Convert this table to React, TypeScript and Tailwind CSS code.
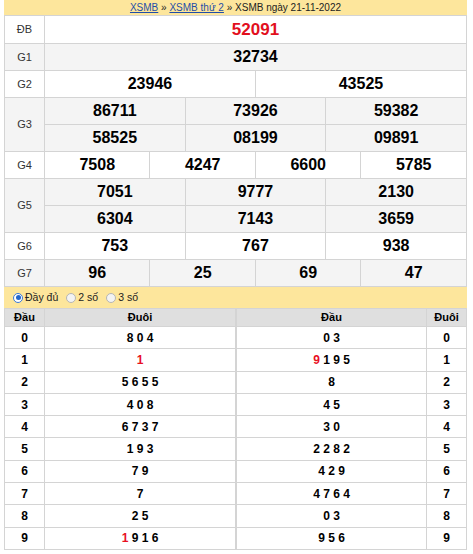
import React from 'react';

const font = { fontFamily: '"Liberation Sans", Arial, sans-serif' };

type Row = { label: string; cells: string[][]; bg: string; red?: boolean };

const prizes: Row[] = [
  { label: 'ĐB', cells: [['52091']], bg: 'bg-white', red: true },
  { label: 'G1', cells: [['32734']], bg: 'bg-[#f4f4f4]' },
  { label: 'G2', cells: [['23946', '43525']], bg: 'bg-white' },
  { label: 'G3', cells: [['86711', '73926', '59382'], ['58525', '08199', '09891']], bg: 'bg-[#f4f4f4]' },
  { label: 'G4', cells: [['7508', '4247', '6600', '5785']], bg: 'bg-white' },
  { label: 'G5', cells: [['7051', '9777', '2130'], ['6304', '7143', '3659']], bg: 'bg-[#f4f4f4]' },
  { label: 'G6', cells: [['753', '767', '938']], bg: 'bg-white' },
  { label: 'G7', cells: [['96', '25', '69', '47']], bg: 'bg-[#f4f4f4]' },
];

// digits marked with * are red
const dau = ['8 0 4', '*1', '5 6 5 5', '4 0 8', '6 7 3 7', '1 9 3', '7 9', '7', '2 5', '*1 9 1 6'];
const duoi = ['0 3', '*9 1 9 5', '8', '4 5', '3 0', '2 2 8 2', '4 2 9', '4 7 6 4', '0 3', '9 5 6'];

function Digits({ s }: { s: string }) {
  if (s.startsWith('*')) {
    const rest = s.slice(1);
    return (
      <>
        <span className="text-[#e8101f]">{rest[0]}</span>
        {rest.slice(1)}
      </>
    );
  }
  return <>{s}</>;
}

function Radio({ checked, label }: { checked?: boolean; label: string }) {
  return (
    <span className="flex items-center gap-[2px]">
      <span
        className={
          'w-[10px] h-[10px] rounded-full border flex items-center justify-center ' +
          (checked ? 'border-[#3a78d6] bg-white' : 'border-[#b5b5b5] bg-[#f3f3f3]')
        }
      >
        {checked && <span className="w-[5px] h-[5px] rounded-full bg-[#2266cc]" />}
      </span>
      <span>{label}</span>
    </span>
  );
}

export default function App() {
  return (
    <div className="w-[473px] h-[554px] bg-white text-black" style={font}>
      <div className="ml-[4px] w-[463px]">
        <div className="h-[15px] bg-[#fde69c] text-[10px] leading-[15px] text-center text-[#222]">
          <a className="text-[#1f4ea8] underline">XSMB</a> » <a className="text-[#1f4ea8] underline">XSMB thứ 2</a> » XSMB ngày 21-11-2022
        </div>
        <table className="w-full table-fixed border border-[#d4d4d4]">
          <colgroup>
            <col className="w-[40px]" />
            {Array.from({ length: 12 }).map((_, i) => (
              <col key={i} />
            ))}
          </colgroup>
          <tbody>
            {prizes.map((p) =>
              p.cells.map((line, li) => (
                <tr key={p.label + li} className={p.bg}>
                  {li === 0 && (
                    <td
                      rowSpan={p.cells.length}
                      className="border border-[#d4d4d4] text-center text-[11px] text-[#333]"
                    >
                      {p.label}
                    </td>
                  )}
                  {line.map((n, i) => (
                    <td
                      key={i}
                      colSpan={12 / line.length}
                      className={
                        'border border-[#d4d4d4] text-center font-bold text-[16px] ' +
                        (p.label === 'ĐB' ? 'h-[28px] text-[#e20f1d] text-[17px]' : 'h-[27px]')
                      }
                    >
                      {n}
                    </td>
                  ))}
                </tr>
              ))
            )}
          </tbody>
        </table>
        <div className="h-[21px] bg-[#fde69c] flex items-center gap-[8px] pl-[9px] text-[10.5px] text-[#222]">
          <Radio checked label="Đầy đủ" />
          <Radio label="2 số" />
          <Radio label="3 số" />
        </div>
        <div className="flex">
          <table className="w-[232px] table-fixed border border-[#d4d4d4] text-[11px] font-bold">
            <colgroup>
              <col className="w-[40px]" />
              <col />
            </colgroup>
            <thead>
              <tr className="bg-[#dfdfdf] h-[18px]">
                <th className="border border-[#d4d4d4]">Đầu</th>
                <th className="border border-[#d4d4d4]">Đuôi</th>
              </tr>
            </thead>
            <tbody>
              {dau.map((d, i) => (
                <tr key={i} className="h-[22.3px] bg-white">
                  <td className="border border-[#d4d4d4] text-center text-[12px]">{i}</td>
                  <td className="border border-[#d4d4d4] text-center text-[12px]">
                    <Digits s={d} />
                  </td>
                </tr>
              ))}
            </tbody>
          </table>
          <table className="w-[231px] table-fixed border border-[#d4d4d4] text-[11px] font-bold">
            <colgroup>
              <col />
              <col className="w-[40px]" />
            </colgroup>
            <thead>
              <tr className="bg-[#dfdfdf] h-[18px]">
                <th className="border border-[#d4d4d4]">Đầu</th>
                <th className="border border-[#d4d4d4]">Đuôi</th>
              </tr>
            </thead>
            <tbody>
              {duoi.map((d, i) => (
                <tr key={i} className="h-[22.3px] bg-white">
                  <td className="border border-[#d4d4d4] text-center text-[12px]">
                    <Digits s={d} />
                  </td>
                  <td className="border border-[#d4d4d4] text-center text-[12px]">{i}</td>
                </tr>
              ))}
            </tbody>
          </table>
        </div>
      </div>
    </div>
  );
}
